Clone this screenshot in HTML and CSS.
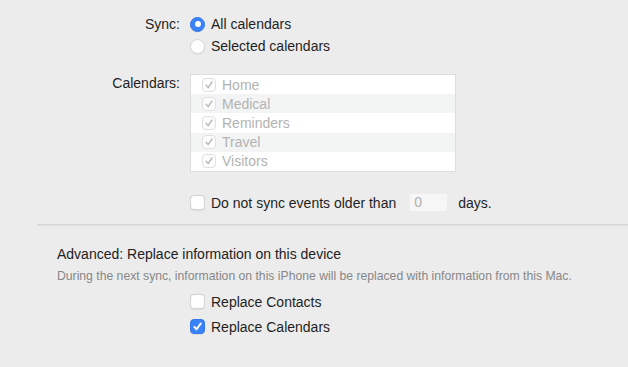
FILE: index.html
```html
<!DOCTYPE html>
<html>
<head>
<meta charset="utf-8">
<link rel="stylesheet" href="styles.css">
</head>
<body>
<div class="pane">
  <div class="form">
    <div class="label">Sync:</div>
    <div class="opts">
      <div class="row"><span class="radio on"></span><span>All calendars</span></div>
      <div class="row"><span class="radio"></span><span>Selected calendars</span></div>
    </div>

    <div class="label cal-label">Calendars:</div>
    <div class="list">
      <div class="item"><span class="cb dis"><svg viewBox="0 0 14 14"><path d="M3.6 7.3 L6 10.1 L10.5 3.5" /></svg></span>Home</div>
      <div class="item alt"><span class="cb dis"><svg viewBox="0 0 14 14"><path d="M3.6 7.3 L6 10.1 L10.5 3.5" /></svg></span>Medical</div>
      <div class="item"><span class="cb dis"><svg viewBox="0 0 14 14"><path d="M3.6 7.3 L6 10.1 L10.5 3.5" /></svg></span>Reminders</div>
      <div class="item alt"><span class="cb dis"><svg viewBox="0 0 14 14"><path d="M3.6 7.3 L6 10.1 L10.5 3.5" /></svg></span>Travel</div>
      <div class="item"><span class="cb dis"><svg viewBox="0 0 14 14"><path d="M3.6 7.3 L6 10.1 L10.5 3.5" /></svg></span>Visitors</div>
    </div>

    <div></div>
    <div class="row older">
      <span class="cb"></span><span>Do not sync events older than</span>
      <span class="field">0</span><span class="days">days.</span>
    </div>
  </div>

  <div class="divider"></div>

  <div class="advanced">
    <div class="heading">Advanced: Replace information on this device</div>
    <div class="desc">During the next sync, information on this iPhone will be replaced with information from this Mac.</div>
    <div class="checks">
      <div class="row"><span class="cb"></span><span>Replace Contacts</span></div>
      <div class="row"><span class="cb on"><svg viewBox="0 0 14 14"><path d="M3.6 7.4 L6 10 L10.4 3.9" /></svg></span><span>Replace Calendars</span></div>
    </div>
  </div>
</div>
</body>
</html>
```
FILE: styles.css
```css
html, body {
  margin: 0;
  padding: 0;
  background: #ececec;
}
body {
  width: 628px;
  height: 367px;
  overflow: hidden;
  font-family: "Liberation Sans", Arial, sans-serif;
  font-size: 14px;
  color: #1f1f1f;
}
.pane {
  padding-top: 13px;
}
.form {
  display: grid;
  grid-template-columns: 180px 1fr;
  column-gap: 10px;
}
.label {
  text-align: right;
  line-height: 22px;
}
.cal-label {
  margin-top: 17px;
  line-height: 18px;
}
.opts {
  display: flex;
  flex-direction: column;
}
.row {
  display: flex;
  align-items: center;
  height: 22px;
  gap: 6px;
}
.radio {
  width: 15px;
  height: 15px;
  border-radius: 50%;
  box-sizing: border-box;
  background: #fff;
  border: 1px solid #d6d6d6;
  box-shadow: 0 0.5px 1px rgba(0,0,0,0.08);
  display: flex;
  align-items: center;
  justify-content: center;
  flex: none;
}
.radio.on {
  background: #3a82f7;
  border-color: #3478f0;
}
.radio.on::after {
  content: "";
  width: 6px;
  height: 6px;
  border-radius: 50%;
  background: #fff;
}
.list {
  margin-top: 17px;
  width: 264px;
  background: #fff;
  border: 1px solid #dedede;
}
.item {
  height: 19.2px;
  display: flex;
  align-items: center;
  gap: 6px;
  padding-left: 11px;
  color: #b3b3b3;
  background: #fff;
}
.item.alt {
  background: #f3f4f4;
}
.cb {
  width: 15px;
  height: 15px;
  box-sizing: border-box;
  border-radius: 4px;
  background: #fff;
  border: 1px solid #d3d3d3;
  box-shadow: 0 0.5px 1px rgba(0,0,0,0.07);
  flex: none;
  display: flex;
}
.cb svg {
  width: 100%;
  height: 100%;
}
.cb svg path {
  fill: none;
  stroke-width: 1.7;
  stroke-linecap: round;
  stroke-linejoin: round;
}
.cb.dis {
  width: 14px;
  height: 14px;
  border-color: #e0e0e0;
  background: #fdfdfd;
  box-shadow: none;
}
.cb.dis svg path {
  stroke: #b8b8b8;
  stroke-width: 1.6;
}
.cb.on {
  background: #3a82f7;
  border-color: #3478f0;
}
.cb.on svg path {
  stroke: #fff;
  stroke-width: 2.1;
}
.older {
  margin-top: 20px;
}
.field {
  margin-left: 7px;
  width: 39px;
  height: 19px;
  box-sizing: border-box;
  background: #f6f6f6;
  border: 1px solid #ededed;
  color: #b0b0b0;
  padding-left: 4px;
  line-height: 17px;
}
.days {
  margin-left: 4px;
}
.divider {
  margin: 10px 0 0 37px;
  height: 1px;
  background: #d6d6d6;
  border-bottom: 1px solid #e3e3e3;
}
.advanced {
  padding-left: 57px;
}
.heading {
  margin-top: 17px;
  line-height: 22px;
  color: #222;
}
.desc {
  margin-top: 3px;
  font-size: 12.2px;
  line-height: 16px;
  color: #878787;
}
.checks {
  margin-top: 7px;
  padding-left: 133px;
  display: flex;
  flex-direction: column;
  gap: 3px;
}
```
